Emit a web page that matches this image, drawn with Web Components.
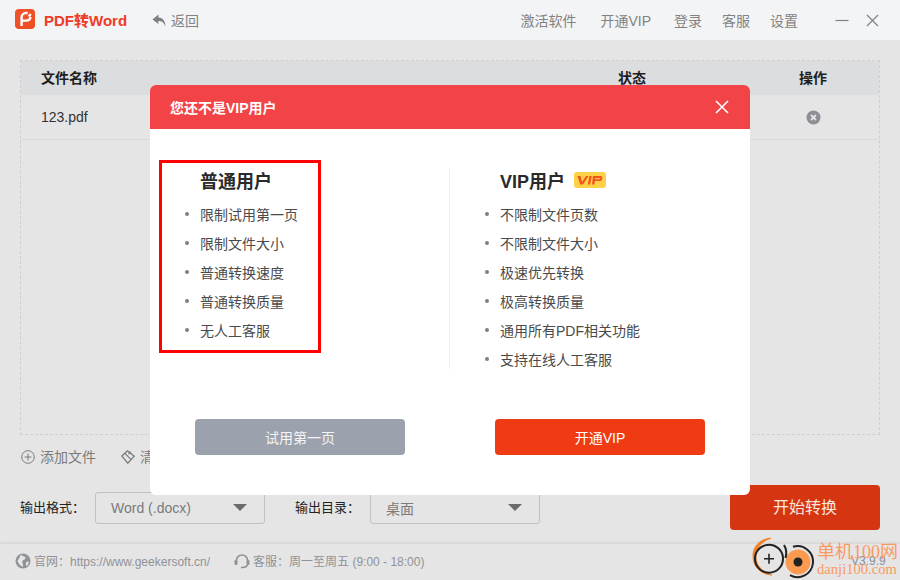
<!DOCTYPE html>
<html lang="zh"><head><meta charset="utf-8"><title>PDF转Word</title>
<style>
html,body{margin:0;padding:0;width:900px;height:580px;overflow:hidden;background:#e5e5e5;font-family:"Liberation Sans","Noto Sans CJK SC",sans-serif;}
</style></head><body>
<app-shell></app-shell>
<script>
const FONT='"Liberation Sans","Noto Sans CJK SC",sans-serif';
function def(name,html){
  customElements.define(name,class extends HTMLElement{
    constructor(){super();const r=this.attachShadow({mode:'open'});r.innerHTML=html;}
  });
}
def('top-bar',`<style>
:host{display:flex;align-items:center;height:40px;background:#f3f4f6;font:14px ${FONT};color:#828282;box-sizing:border-box;padding-left:15px;flex:none}
.logo{width:20px;height:20px;display:block;margin-bottom:3px}
.name{font-weight:700;color:#ef3b26;font-size:15px;margin-left:9px;padding-bottom:2px}
.back{display:flex;align-items:center;margin-left:25px;gap:5px}
.nav{margin-left:auto;display:flex;align-items:center}
.nav span{white-space:nowrap}
svg{display:block}
</style>
<svg class="logo" viewBox="0 0 20 20"><defs><linearGradient id="g" x1="0" y1="0" x2="1" y2="1"><stop offset="0" stop-color="#f0552f"/><stop offset="1" stop-color="#ee4b22"/></linearGradient></defs><rect width="20" height="20" rx="4" fill="url(#g)"/><path d="M6.6 17V8.5C6.6 5.8 8.6 4 11 4H12.6M15.8 5 13.8 7.4M15.4 8C15.4 10.4 13.4 11.6 11 11.6H6.6" fill="none" stroke="#fff" stroke-width="2.4"/></svg>
<span class="name">PDF转Word</span>
<div class="back"><svg width="14" height="13" viewBox="0 0 14 13"><path d="M6.4 0.5 0.5 5.4 6.4 10V7.1C9.4 7.1 11.6 8.3 13.4 12.4 13.4 7.6 11 3.8 6.4 3.6Z" fill="#7f7f7f"/></svg><span>返回</span></div>
<div class="nav">
<span style="margin-right:24px">激活软件</span><span style="margin-right:23px">开通VIP</span><span style="margin-right:20px">登录</span><span style="margin-right:20px">客服</span><span style="margin-right:37px">设置</span>
<svg width="14" height="14" viewBox="0 0 14 14" style="margin-right:17px"><path d="M0.5 7.5H13.5" stroke="#828282" stroke-width="1.2"/></svg>
<svg width="13" height="13" viewBox="0 0 13 13" style="margin-right:21px"><path d="M1 1 12 12M12 1 1 12" stroke="#828282" stroke-width="1.2"/></svg>
</div>`);
def('file-table',`<style>
:host{display:flex;flex-direction:column;height:375px;margin:20px 20px 0;box-sizing:border-box;border:1px dashed #cfcfd1;font:14px ${FONT};color:#2b2b2b;flex:none}
.head,.row{display:grid;grid-template-columns:577px 181px 28px;align-items:center;padding-left:20px}
.head{height:34px;background:#dcdddf;font-weight:700;color:#1e1e1e;font-size:14px;box-sizing:border-box;padding-bottom:2px}
.row{height:45px;border-bottom:1px solid #dadada;color:#333;box-sizing:border-box}
.x{display:block;margin:0 auto}
</style>
<div class="head"><span>文件名称</span><span>状态</span><span>操作</span></div>
<div class="row"><span>123.pdf</span><span></span><svg class="x" width="15" height="15" viewBox="0 0 15 15"><circle cx="7.5" cy="7.5" r="7" fill="#8d8f95"/><path d="M5 5 10 10M10 5 5 10" stroke="#e5e5e5" stroke-width="1.8"/></svg></div>`);
def('tool-row',`<style>
:host{display:flex;align-items:center;height:44px;box-sizing:border-box;padding:0 0 1px 21px;gap:25px;font:14px ${FONT};color:#7b7b7b;flex:none}
.i{display:flex;align-items:center;gap:5px}
.i span{padding-bottom:1px}
svg{display:block}
</style>
<div class="i"><svg width="14" height="14" viewBox="0 0 14 14"><circle cx="7" cy="7" r="6.3" fill="none" stroke="#7b7b7b"/><path d="M7 3.6V10.4M3.6 7H10.4" stroke="#7b7b7b"/></svg><span>添加文件</span></div>
<div class="i"><svg width="14" height="14" viewBox="0 0 14 14"><path d="M0.8 6 6.5 0.8 13.2 6.2 6.8 13.2Z M3.8 3.4 10 9.4M7.5 4 9.8 1.8" fill="none" stroke="#7b7b7b" stroke-width="1.3"/></svg><span>清空列表</span></div>`);
def('out-select',`<style>
:host{display:flex;align-items:center;justify-content:space-between;width:170px;height:32px;box-sizing:border-box;border:1px solid #bfbfc4;border-radius:3px;padding:0 17px 1px 15px;font:14px ${FONT};color:#7b7b7b}
i{width:0;height:0;border-left:7px solid transparent;border-right:7px solid transparent;border-top:7px solid #6b6b6b;display:block}
</style><slot></slot><i></i>`);
def('output-row',`<style>
:host{display:flex;align-items:flex-start;height:64px;padding-left:20px;font:13px ${FONT};color:#222;flex:none;box-sizing:border-box;padding-top:13px}
.l{line-height:32px;white-space:nowrap;width:75px}
.go{margin-left:190px;width:150px;height:45px;margin-top:-7px;box-sizing:border-box;padding-bottom:3px;background:#d63512;border-radius:4px;color:#f8e6df;font-size:16px;display:flex;align-items:center;justify-content:center}
.m{margin-left:30px}
</style>
<span class="l">输出格式：</span><out-select>Word (.docx)</out-select>
<span class="l m">输出目录：</span><out-select>桌面</out-select>
<div class="go">开始转换</div>`);
def('foot-bar',`<style>
:host{display:flex;align-items:center;height:37px;box-sizing:border-box;border-top:1px solid #d9d9d9;box-shadow:0 -1px 2px rgba(0,0,0,.05);padding:0 0 3px 15px;font:12px ${FONT};color:#8f9298;flex:none}
.i{display:flex;align-items:center;gap:3px}
svg{display:block}
</style>
<div class="i"><svg width="16" height="16" viewBox="0 0 16 16"><circle cx="8" cy="8" r="7.5" fill="#8f9298"/><path d="M6 1.500C7 3.500 9.500 3 10.500 4.500 11 6.500 8.500 6.500 7.500 8 6.500 9.500 8.500 10.500 8 14 5 12.500 3 10 2.500 8 3.500 6 5 4 6 1.500Z M11 9 14 8.500 13 12 11 13Z" fill="#e5e5e5"/></svg><span>官网：https://www.geekersoft.cn/</span></div>
<div class="i" style="margin-left:24px"><svg width="16" height="16" viewBox="0 0 16 16"><path d="M2.400 7.600A5.600 5.600 0 0 1 13.600 7.600" fill="none" stroke="#8f9298" stroke-width="1.600"/><rect x="0.500" y="7" width="3" height="5" rx="1.200" fill="#8f9298"/><rect x="12.500" y="7" width="3" height="5" rx="1.200" fill="#8f9298"/><path d="M13.600 11.500C13 14 10.500 14.600 7 14.400" fill="none" stroke="#8f9298" stroke-width="1.500"/></svg><span>客服：周一至周五 (9:00 - 18:00)</span></div>`);
def('plan-col',`<style>
:host{display:block;font:14px ${FONT};color:#4a4a4a}
.t{display:flex;align-items:center;height:24px;font-size:18px;font-weight:700;color:#2a2a2a;padding-left:50px;gap:9px;margin-bottom:7px}
</style><div class="t"><slot name="title"></slot></div><slot></slot>`);
def('plan-item',`<style>
:host{display:flex;align-items:center;height:29px;font:14px ${FONT};color:#4a4a4a;padding-left:35px;white-space:nowrap}
i{width:4px;height:4px;border-radius:50%;background:#808080;margin-right:11px;flex:none}
</style><i></i><slot></slot>`);
def('vip-modal',`<style>
:host{position:absolute;left:150px;top:85px;width:600px;height:410px;background:#fff;border-radius:6px;overflow:hidden;display:flex;flex-direction:column;font:14px ${FONT}}
.h{height:44px;background:#f24446;color:#fff;font-weight:700;font-size:14px;display:flex;align-items:center;justify-content:space-between;padding:0 21px 0 20px;flex:none}
.b{display:grid;grid-template-columns:299px 1fr;padding-top:39px;height:201px;box-sizing:content-box;flex:none}
.right{border-left:1px solid #efefef;height:201px}
.btns{display:flex;padding:50px 0 0 45px;gap:90px}
.btn{width:210px;height:36px;box-sizing:border-box;padding-bottom:1px;border-radius:4px;color:#fff;display:flex;align-items:center;justify-content:center;font-size:14px}
.grey{background:#9ca2ad;color:#f4f5f6}.red{background:#ee3b14}
.vip{width:32px;height:16px;display:block}
.redbox{position:absolute;left:9px;top:75px;width:162px;height:193px;box-sizing:border-box;border:3px solid #f00;pointer-events:none}
svg{display:block}
</style>
<div class="h"><span>您还不是VIP用户</span><svg width="14" height="14" viewBox="0 0 14 14"><path d="M1 1 13 13M13 1 1 13" stroke="#fff" stroke-width="1.6"/></svg></div>
<div class="b">
<plan-col><span slot="title">普通用户</span>
<plan-item>限制试用第一页</plan-item><plan-item>限制文件大小</plan-item><plan-item>普通转换速度</plan-item><plan-item>普通转换质量</plan-item><plan-item>无人工客服</plan-item></plan-col>
<div class="right"><plan-col><span slot="title">VIP用户</span><svg slot="title" class="vip" viewBox="0 0 32 16"><rect width="32" height="16" rx="3" fill="#fdd145"/><path d="M3.500 4H6.500L8 10 12 4H14.500L9 12.500H6.200Z M15.500 4H17.800L16 12.500H13.700Z M19 4H27C29 4 29 8.600 26.400 8.900H21L20.300 12.500H18ZM21 6 20.900 7.200H25.600C26.600 7.200 26.700 6 25.800 6Z" fill="#f0531f"/></svg>
<plan-item>不限制文件页数</plan-item><plan-item>不限制文件大小</plan-item><plan-item>极速优先转换</plan-item><plan-item>极高转换质量</plan-item><plan-item>通用所有PDF相关功能</plan-item><plan-item>支持在线人工客服</plan-item></plan-col></div>
</div>
<div class="btns"><div class="btn grey">试用第一页</div><div class="btn red">开通VIP</div></div>
<div class="redbox"></div>`);
def('dj-mark',`<style>
:host{position:absolute;left:750px;top:535px;width:150px;height:45px;font-family:"Liberation Serif","Noto Sans CJK SC",serif;color:#fb9a5e}
svg{position:absolute;left:2px;top:2px}
.a{position:absolute;left:67px;top:6px;font-size:18px;line-height:22px;white-space:nowrap}
.b{position:absolute;left:67px;top:25px;font-size:14.6px;line-height:18px;white-space:nowrap}
.v{position:absolute;left:101px;top:19px;font:12px ${FONT};color:#8a909a}
</style>
<svg width="64" height="42" viewBox="0 0 64 42"><path d="M19 1.200C7 2 .8 10 1 19.500 1.200 30 9 37.500 20 38 11 35.500 4 29 3.800 20 3.600 11 10 4 19 1.200Z" fill="#f58226" stroke="#f58226" stroke-width="1"/><circle cx="17" cy="21.700" r="14" fill="none" stroke="#222" stroke-width="2"/><path d="M12 21.700H22M17 16.700V26.700" stroke="#222" stroke-width="1.600"/><circle cx="46" cy="25" r="12.500" fill="#fb9a50"/><circle cx="46" cy="25" r="4.500" fill="#222"/><path d="M41 9.800A15.500 15.500 0 1 1 38 38.200" fill="none" stroke="#222" stroke-width="2"/><path d="M32 8C34.500 12 35 16 33.500 21" fill="none" stroke="#222" stroke-width="2"/></svg>
<span class="v">V3.9.9</span><span class="a">单机100网</span><span class="b">danji100.com</span>`);
def('app-shell',`<style>
:host{display:flex;flex-direction:column;width:900px;height:580px;position:relative;background:#e5e5e5;overflow:hidden}
</style>
<top-bar></top-bar><file-table></file-table><tool-row></tool-row><output-row></output-row><foot-bar></foot-bar>
<vip-modal></vip-modal><dj-mark></dj-mark>`);
</script>
</body></html>
